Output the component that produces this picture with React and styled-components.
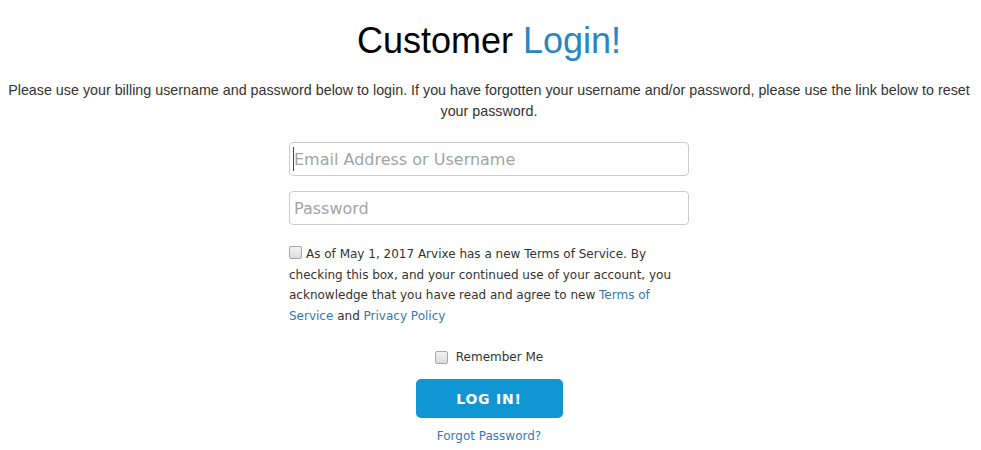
import styled, { createGlobalStyle } from "styled-components"

// GLOBAL
const Global = createGlobalStyle`
  body {
    margin: 0;
    padding: 0 9px 0 6px;
    background: #fff;
    font-family: "Liberation Sans", Arial, sans-serif;
  }
`
// STYLED
const Page = styled.div`
  display: flex;
  flex-direction: column;
  align-items: center;
`
const Title = styled.h1`
  margin: 21px 0 0;
  font-size: 36px;
  line-height: 40px;
  font-weight: normal;
  color: #000;
  text-align: center;
`
const Accent = styled.span`
  color: #2a86bf;
`
const Intro = styled.p`
  margin: 19px 0 0;
  font-size: 14.3px;
  line-height: 21px;
  color: #333;
  text-align: center;
`
const Form = styled.form`
  width: 400px;
  margin-top: 20px;
  display: flex;
  flex-direction: column;
  font-family: "DejaVu Sans", Verdana, sans-serif;
`
const Field = styled.div`
  position: relative;
  & + & {
    margin-top: 15px;
  }
`
const Input = styled.input`
  box-sizing: border-box;
  width: 100%;
  height: 34px;
  padding: 0 4px;
  border: 1px solid #ccc;
  border-radius: 4px;
  font-family: "DejaVu Sans", Verdana, sans-serif;
  font-size: 16px;
  color: #555;
  outline: none;
  &::placeholder {
    color: #a4a4a4;
  }
`
const Caret = styled.span`
  position: absolute;
  left: 4px;
  top: 5px;
  width: 1px;
  height: 24px;
  background: #444;
`
const Box = styled.input.attrs({ type: "checkbox" })`
  appearance: none;
  box-sizing: border-box;
  width: 13px;
  height: 13px;
  margin: 0 ${p => p.$gap}px 0 0;
  border: 1px solid #a6a6a6;
  border-radius: 2px;
  background: linear-gradient(#f3f3f3, #dcdcdc);
  vertical-align: ${p => p.$align};
`
const Terms = styled.label`
  margin-top: 19px;
  font-size: 12px;
  line-height: 20.5px;
  color: #333;
`
const Link = styled.a`
  color: #3579b3;
  text-decoration: none;
`
const Remember = styled.label`
  margin-top: 21px;
  display: flex;
  justify-content: center;
  align-items: center;
  font-size: 12px;
  line-height: 20px;
  color: #333;
`
const Submit = styled.button`
  align-self: center;
  width: 147px;
  height: 39px;
  margin-top: 12px;
  border: none;
  border-radius: 5px;
  background: #1196d4;
  color: #fff;
  font-family: "DejaVu Sans", Verdana, sans-serif;
  font-size: 14px;
  font-weight: bold;
  letter-spacing: 0.8px;
  cursor: pointer;
`
const Forgot = styled(Link)`
  align-self: center;
  margin-top: 8px;
  font-size: 12px;
  line-height: 20px;
`
// COMPONENT
const App = () => {
  return (
    <Page>
      <Global />
      <Title>Customer <Accent>Login!</Accent></Title>
      <Intro>
        Please use your billing username and password below to login. If you have forgotten your username and/or password, please use the link below to reset your password.
      </Intro>
      <Form onSubmit={e => e.preventDefault()}>
        <Field>
          <Input type='text' placeholder='Email Address or Username' />
          <Caret />
        </Field>
        <Field>
          <Input type='password' placeholder='Password' />
        </Field>
        <Terms>
          <Box $gap={4} $align='-1px' />
          As of May 1, 2017 Arvixe has a new Terms of Service. By checking this box, and your continued use of your account, you acknowledge that you have read and agree to new <Link href='#'>Terms of Service</Link> and <Link href='#'>Privacy Policy</Link>
        </Terms>
        <Remember>
          <Box $gap={8} $align='middle' />
          Remember Me
        </Remember>
        <Submit type='submit'>LOG IN!</Submit>
        <Forgot href='#'>Forgot Password?</Forgot>
      </Form>
    </Page>
  )
}

export default App
